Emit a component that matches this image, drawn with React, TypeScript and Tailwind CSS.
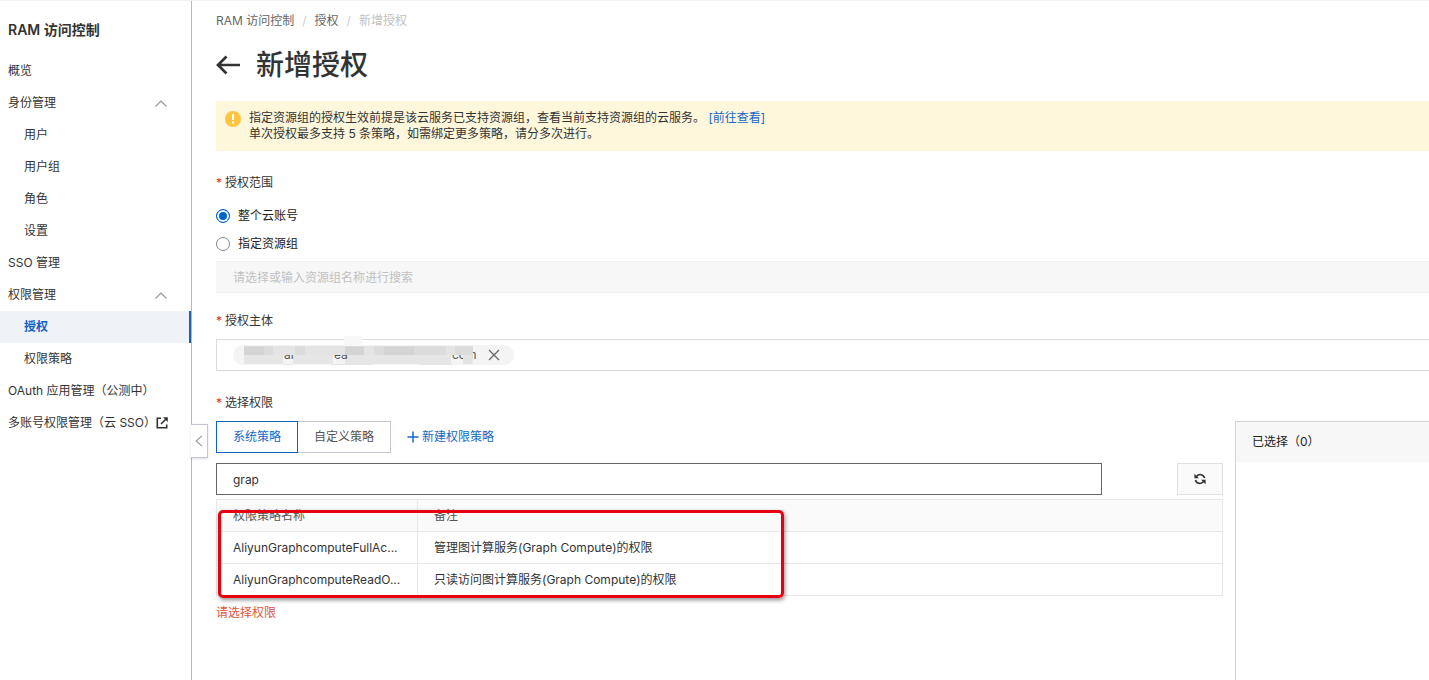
import { clsx } from 'clsx';

type NavItem = {
  label: string;
  child?: boolean;
  group?: boolean;
  active?: boolean;
  external?: boolean;
};

const nav: NavItem[] = [
  { label: '概览' },
  { label: '身份管理', group: true },
  { label: '用户', child: true },
  { label: '用户组', child: true },
  { label: '角色', child: true },
  { label: '设置', child: true },
  { label: 'SSO 管理' },
  { label: '权限管理', group: true },
  { label: '授权', child: true, active: true },
  { label: '权限策略', child: true },
  { label: 'OAuth 应用管理（公测中）' },
  { label: '多账号权限管理（云 SSO）', external: true },
];

const policies = [
  { name: 'AliyunGraphcomputeFullAc...', note: '管理图计算服务(Graph Compute)的权限' },
  { name: 'AliyunGraphcomputeReadO...', note: '只读访问图计算服务(Graph Compute)的权限' },
];

function ExternalIcon() {
  return (
    <svg viewBox="0 0 12 12" className="h-3 w-3 shrink-0" fill="none" stroke="currentColor" strokeWidth="1.6">
      <path d="M5 1.300H1.300v9.400h9.400V7.500" />
      <path d="M10.500 1.500L5 7" />
      <path d="M7 .2h4.800V5z" fill="currentColor" stroke="none" />
    </svg>
  );
}

function Sidebar() {
  return (
    <aside className="relative w-48 shrink-0 border-r border-[#b8b8b8]">
      <h2 className="px-2 pt-[19px] pb-[15px] text-sm leading-5 font-semibold">RAM 访问控制</h2>
      <nav>
        {nav.map((item) =>
          item.group ? (
            <button key={item.label} type="button" className="flex h-8 w-full items-center justify-between pr-6 pl-2">
              {item.label}
              <svg viewBox="0 0 12 8" className="h-2 w-3" fill="none" stroke="#999" strokeWidth="1.2">
                <path d="M.5 7.500L6 2l5.500 5.500" />
              </svg>
            </button>
          ) : (
            <a
              key={item.label}
              href="#"
              className={clsx(
                'flex h-8 items-center whitespace-nowrap',
                item.child ? 'pl-6' : 'pl-2',
                item.external && 'justify-between pr-6',
                item.active && 'border-r-2 border-[#1f5fae] bg-[#eff3f8] font-semibold text-[#0f62c4]',
              )}
            >
              {item.label}
              {item.external && <ExternalIcon />}
            </a>
          ),
        )}
      </nav>

      <button
        type="button"
        aria-label="收起"
        className="absolute top-[423px] left-full flex h-[34px] w-[17px] items-center justify-center border border-l-0 border-[#c4c6cf] bg-white shadow-sm"
      >
        <svg viewBox="0 0 8 12" className="h-3 w-2" fill="none" stroke="#999" strokeWidth="1.1">
          <path d="M7 .8L1.2 6 7 11.2" />
        </svg>
      </button>
    </aside>
  );
}

function FieldLabel({ children }: { children: string }) {
  return (
    <div className="flex h-4 items-center">
      <span className="mr-[3px] text-[#d93026]">*</span>
      {children}
    </div>
  );
}

function Scope() {
  return (
    <section className="pt-6">
      <FieldLabel>授权范围</FieldLabel>
      <div className="mt-[11px] flex flex-col text-[#222]">
        {['整个云账号', '指定资源组'].map((label, i) => (
          <label key={label} className="flex h-7 items-center gap-2">
            <input
              type="radio"
              name="scope"
              defaultChecked={i === 0}
              className="h-3.5 w-3.5 appearance-none rounded-full border border-[#888] bg-white checked:border-[#0064c8] checked:bg-[#0064c8] checked:shadow-[inset_0_0_0_2px_#fff]"
            />
            {label}
          </label>
        ))}
      </div>
      <input
        aria-label="资源组"
        disabled
        placeholder="请选择或输入资源组名称进行搜索"
        className="mt-[3px] block h-8 w-full border-y border-[#f0f0f0] bg-[#f7f7f7] px-[17px] placeholder:text-[#c1c1c1]"
      />
    </section>
  );
}

function Principal() {
  return (
    <section className="pt-5">
      <FieldLabel>授权主体</FieldLabel>
      <div className="mt-2.5 flex h-8 items-center border border-r-0 border-[#d9d9d9] pl-4">
        <div className="flex h-5 items-center rounded-full bg-[#f4f4f4] pr-3.5 pl-2.5">
          {/* masked account name */}
          <svg width="237" height="20" viewBox="0 0 237 20" className="overflow-visible">
            <path fill="#f8f8f8" d="M101-9h18V1h-18z" />
            <path fill="#e6e6e6" d="M1 1h229v17h-20v2h-34v-1h-46v1H88v-1H50v1H40v-1H1z" />
            <path fill="#f4f4f4" d="M40 10h10v9H40zM90 10h12v9H90zM208 10h12v9h-12z" />
            <g fontSize="12" fill="#555">
              <text x="41" y="14">ar</text>
              <text x="91" y="14">ea</text>
              <text x="209" y="14">co</text>
              <text x="223" y="14">m</text>
            </g>
            <path fill="#dcdcdc" d="M1 1h229v9H1z" />
            <path fill="#e4e4e4" d="M30 1h22v9H30zM62 1h40v9H62zM121 1h10v9h-10zM203 1h9v9h-9z" />
            <path fill="#d4d4d4" d="M1 2h20v8H1zM102 2h19v8h-19zM141 2h30v8h-30z" />
            <path fill="#e4e4e4" d="M220 10h9v9h-9z" />
          </svg>
          <button type="button" aria-label="移除" className="ml-2">
            <svg viewBox="0 0 12 12" className="h-3 w-3" stroke="#666" strokeWidth="1.3">
              <path d="M1 1l10 10M11 1L1 11" />
            </svg>
          </button>
        </div>
      </div>
    </section>
  );
}

function PolicyTable() {
  return (
    <div className="relative mt-1">
      <table className="w-full table-fixed border-collapse border border-[#e8e8e8] text-left">
        <thead>
          <tr className="h-8 bg-[#fafafa] text-[#555]">
            <th className="w-[201px] border border-[#e8e8e8] px-4 font-normal">权限策略名称</th>
            <th className="border border-[#e8e8e8] px-4 font-normal">备注</th>
          </tr>
        </thead>
        <tbody>
          {policies.map((p) => (
            <tr key={p.name} className="h-8 border-b border-[#e8e8e8]">
              <td className="border-r border-[#e8e8e8] pl-4 whitespace-nowrap">{p.name}</td>
              <td className="px-4">{p.note}</td>
            </tr>
          ))}
        </tbody>
      </table>
      {/* highlight around the results */}
      <div className="pointer-events-none absolute top-[11px] -bottom-0.5 left-0.5 w-[566px] rounded-[5px] border-3 border-[#e60012] shadow-[1px_2px_4px_rgba(0,0,0,0.45)]" />
    </div>
  );
}

function Permissions() {
  return (
    <section className="flex flex-1 flex-col pt-6">
      <FieldLabel>选择权限</FieldLabel>
      <div className="mt-2.5 flex flex-1 gap-3">
        <div className="min-w-0 flex-1">
          <div className="flex h-8 items-stretch">
            <button type="button" className="border border-[#0f62b4] px-4 text-[#1668c7]">
              系统策略
            </button>
            <button type="button" className="border border-l-0 border-[#c4c6cf] px-4 text-[#555]">
              自定义策略
            </button>
            <a href="#" className="ml-4 flex items-center gap-[3px] text-[#1668c7]">
              <svg viewBox="0 0 12 12" className="h-3 w-3" stroke="currentColor" strokeWidth="1.5">
                <path d="M6 .5v11M.5 6h11" />
              </svg>
              新建权限策略
            </a>
          </div>

          <div className="mt-2.5 flex justify-between gap-[75px]">
            <input
              aria-label="搜索策略"
              defaultValue="grap"
              className="h-8 min-w-0 flex-1 border border-[#666] px-4 outline-none"
            />
            <button
              type="button"
              aria-label="刷新"
              className="flex h-8 w-[46px] items-center justify-center border border-[#e0e0e0] bg-[#fafafa]"
            >
              <svg viewBox="0 0 12 12" className="h-3 w-3" fill="none" stroke="#333" strokeWidth="1.6">
                <path d="M2.500 3.400A4.600 4.600 0 0 1 10.600 5M9.500 8.600A4.600 4.600 0 0 1 1.400 7" />
                <path d="M.4.800v4.400h4.400zM11.600 11.200V6.800H7.200z" fill="#333" stroke="none" />
              </svg>
            </button>
          </div>

          <PolicyTable />
          <p className="mt-[9px] leading-4 text-[#e0573a]">请选择权限</p>
        </div>

        <aside className="w-[194px] shrink-0 border-t border-l border-[#d4d4d4]">
          <h3 className="flex h-10 items-center bg-[#f7f7f7] px-4 text-[#222]">已选择（0）</h3>
        </aside>
      </div>
    </section>
  );
}

export default function App() {
  return (
    <div className="flex min-h-screen border-t border-[#f2f2f2] bg-white font-[Inter,'Noto_Sans_CJK_SC',sans-serif] text-xs text-[#333]">
      <Sidebar />
      <main className="flex min-w-0 flex-1 flex-col pl-6">
        <nav className="flex h-4 gap-2 pt-3 leading-4 text-[#666]">
          <a href="#">RAM 访问控制</a>
          <span className="text-[#ccc]">/</span>
          <a href="#">授权</a>
          <span className="text-[#ccc]">/</span>
          <span className="text-[#c1c1c1]">新增授权</span>
        </nav>

        <div className="mt-[30px] flex h-9 items-center gap-4">
          <button type="button" aria-label="返回">
            <svg viewBox="0 0 24 20" className="h-5 w-6" fill="none" stroke="#333" strokeWidth="2.7">
              <path d="M10.500 1.500L2 10l8.500 8.500M2 10h22" />
            </svg>
          </button>
          <h1 className="text-[28px] leading-9 font-medium">新增授权</h1>
        </div>

        <div className="mt-[18px] flex gap-2 bg-[#fff7db] py-[9px] pl-[9px]">
          <svg viewBox="0 0 16 16" className="mt-px h-4 w-4 shrink-0">
            <circle cx="8" cy="8" r="8" fill="#ffc440" />
            <path d="M7 3h2v6H7zM7 10.500h2v2H7z" fill="#fff" />
          </svg>
          <div className="leading-4">
            <p>
              指定资源组的授权生效前提是该云服务已支持资源组，查看当前支持资源组的云服务。{' '}
              <a href="#" className="text-[#1668c7]">
                [前往查看]
              </a>
            </p>
            <p>单次授权最多支持 5 条策略，如需绑定更多策略，请分多次进行。</p>
          </div>
        </div>

        <Scope />
        <Principal />
        <Permissions />
      </main>
    </div>
  );
}
